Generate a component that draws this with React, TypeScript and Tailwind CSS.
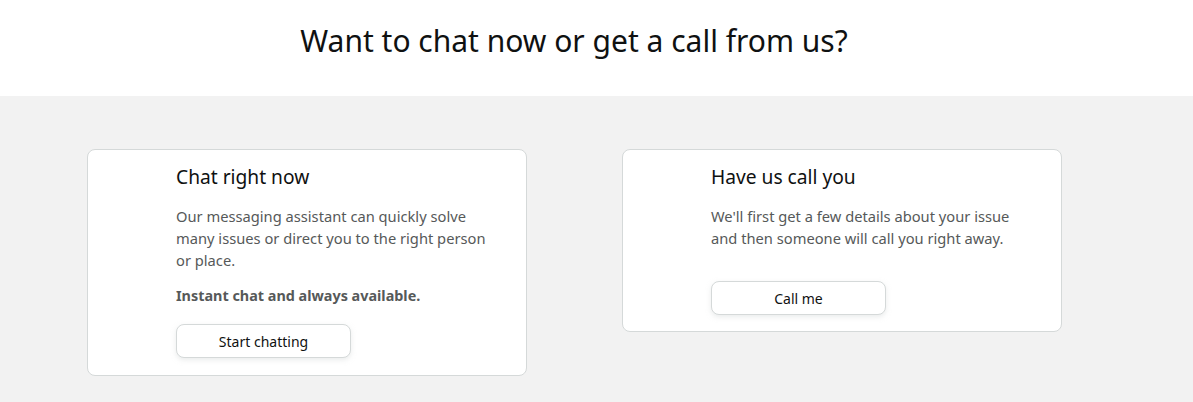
import React from 'react';

const font = { fontFamily: '"Noto Sans", Arial, sans-serif' };

const OptionCard: React.FC<{
  title: string;
  lines: string[];
  bold?: string;
  button: string;
  buttonGap: string;
  bottom: string;
}> = ({ title, lines, bold, button, buttonGap, bottom }) => (
  <div className={`w-[440px] rounded-lg border border-[#d5d9d9] bg-white pl-[88px] pr-6 pt-[13px] ${bottom}`}>
    <h2 className="text-[19.2px] leading-[28px] text-[#0f1111] mb-[14px]">{title}</h2>
    <p className="text-[14.7px] leading-[22px] text-[#565959]">
      {lines.map((l, i) => (
        <React.Fragment key={i}>
          {l}
          {i < lines.length - 1 && <br />}
        </React.Fragment>
      ))}
    </p>
    {bold && (
      <p className="mt-[14px] text-[14.4px] leading-[22px] font-bold text-[#565959]">{bold}</p>
    )}
    <button
      className={`${buttonGap} block w-[175px] h-[34px] rounded-lg border border-[#d5d9d9] bg-white text-[14px] text-[#0f1111] shadow-[0_2px_5px_rgba(213,217,217,0.5)]`}
    >
      {button}
    </button>
  </div>
);

export default function App() {
  return (
    <div style={font} className="min-h-[402px] bg-[#f2f2f2]">
      <header className="h-[96px] bg-white">
        <h1 className="w-[1148px] text-center pt-[21px] text-[30px] leading-[40px] text-[#0f1111]">
          Want to chat now or get a call from us?
        </h1>
      </header>
      <main className="flex items-start gap-[95px] pl-[87px] pt-[53px]">
        <OptionCard
          title="Chat right now"
          lines={[
            'Our messaging assistant can quickly solve',
            'many issues or direct you to the right person',
            'or place.',
          ]}
          bold="Instant chat and always available."
          button="Start chatting"
          buttonGap="mt-[17px]"
          bottom="pb-[17px]"
        />
        <OptionCard
          title="Have us call you"
          lines={[
            "We'll first get a few details about your issue",
            'and then someone will call you right away.',
          ]}
          button="Call me"
          buttonGap="mt-[32px]"
          bottom="pb-[16px]"
        />
      </main>
    </div>
  );
}
